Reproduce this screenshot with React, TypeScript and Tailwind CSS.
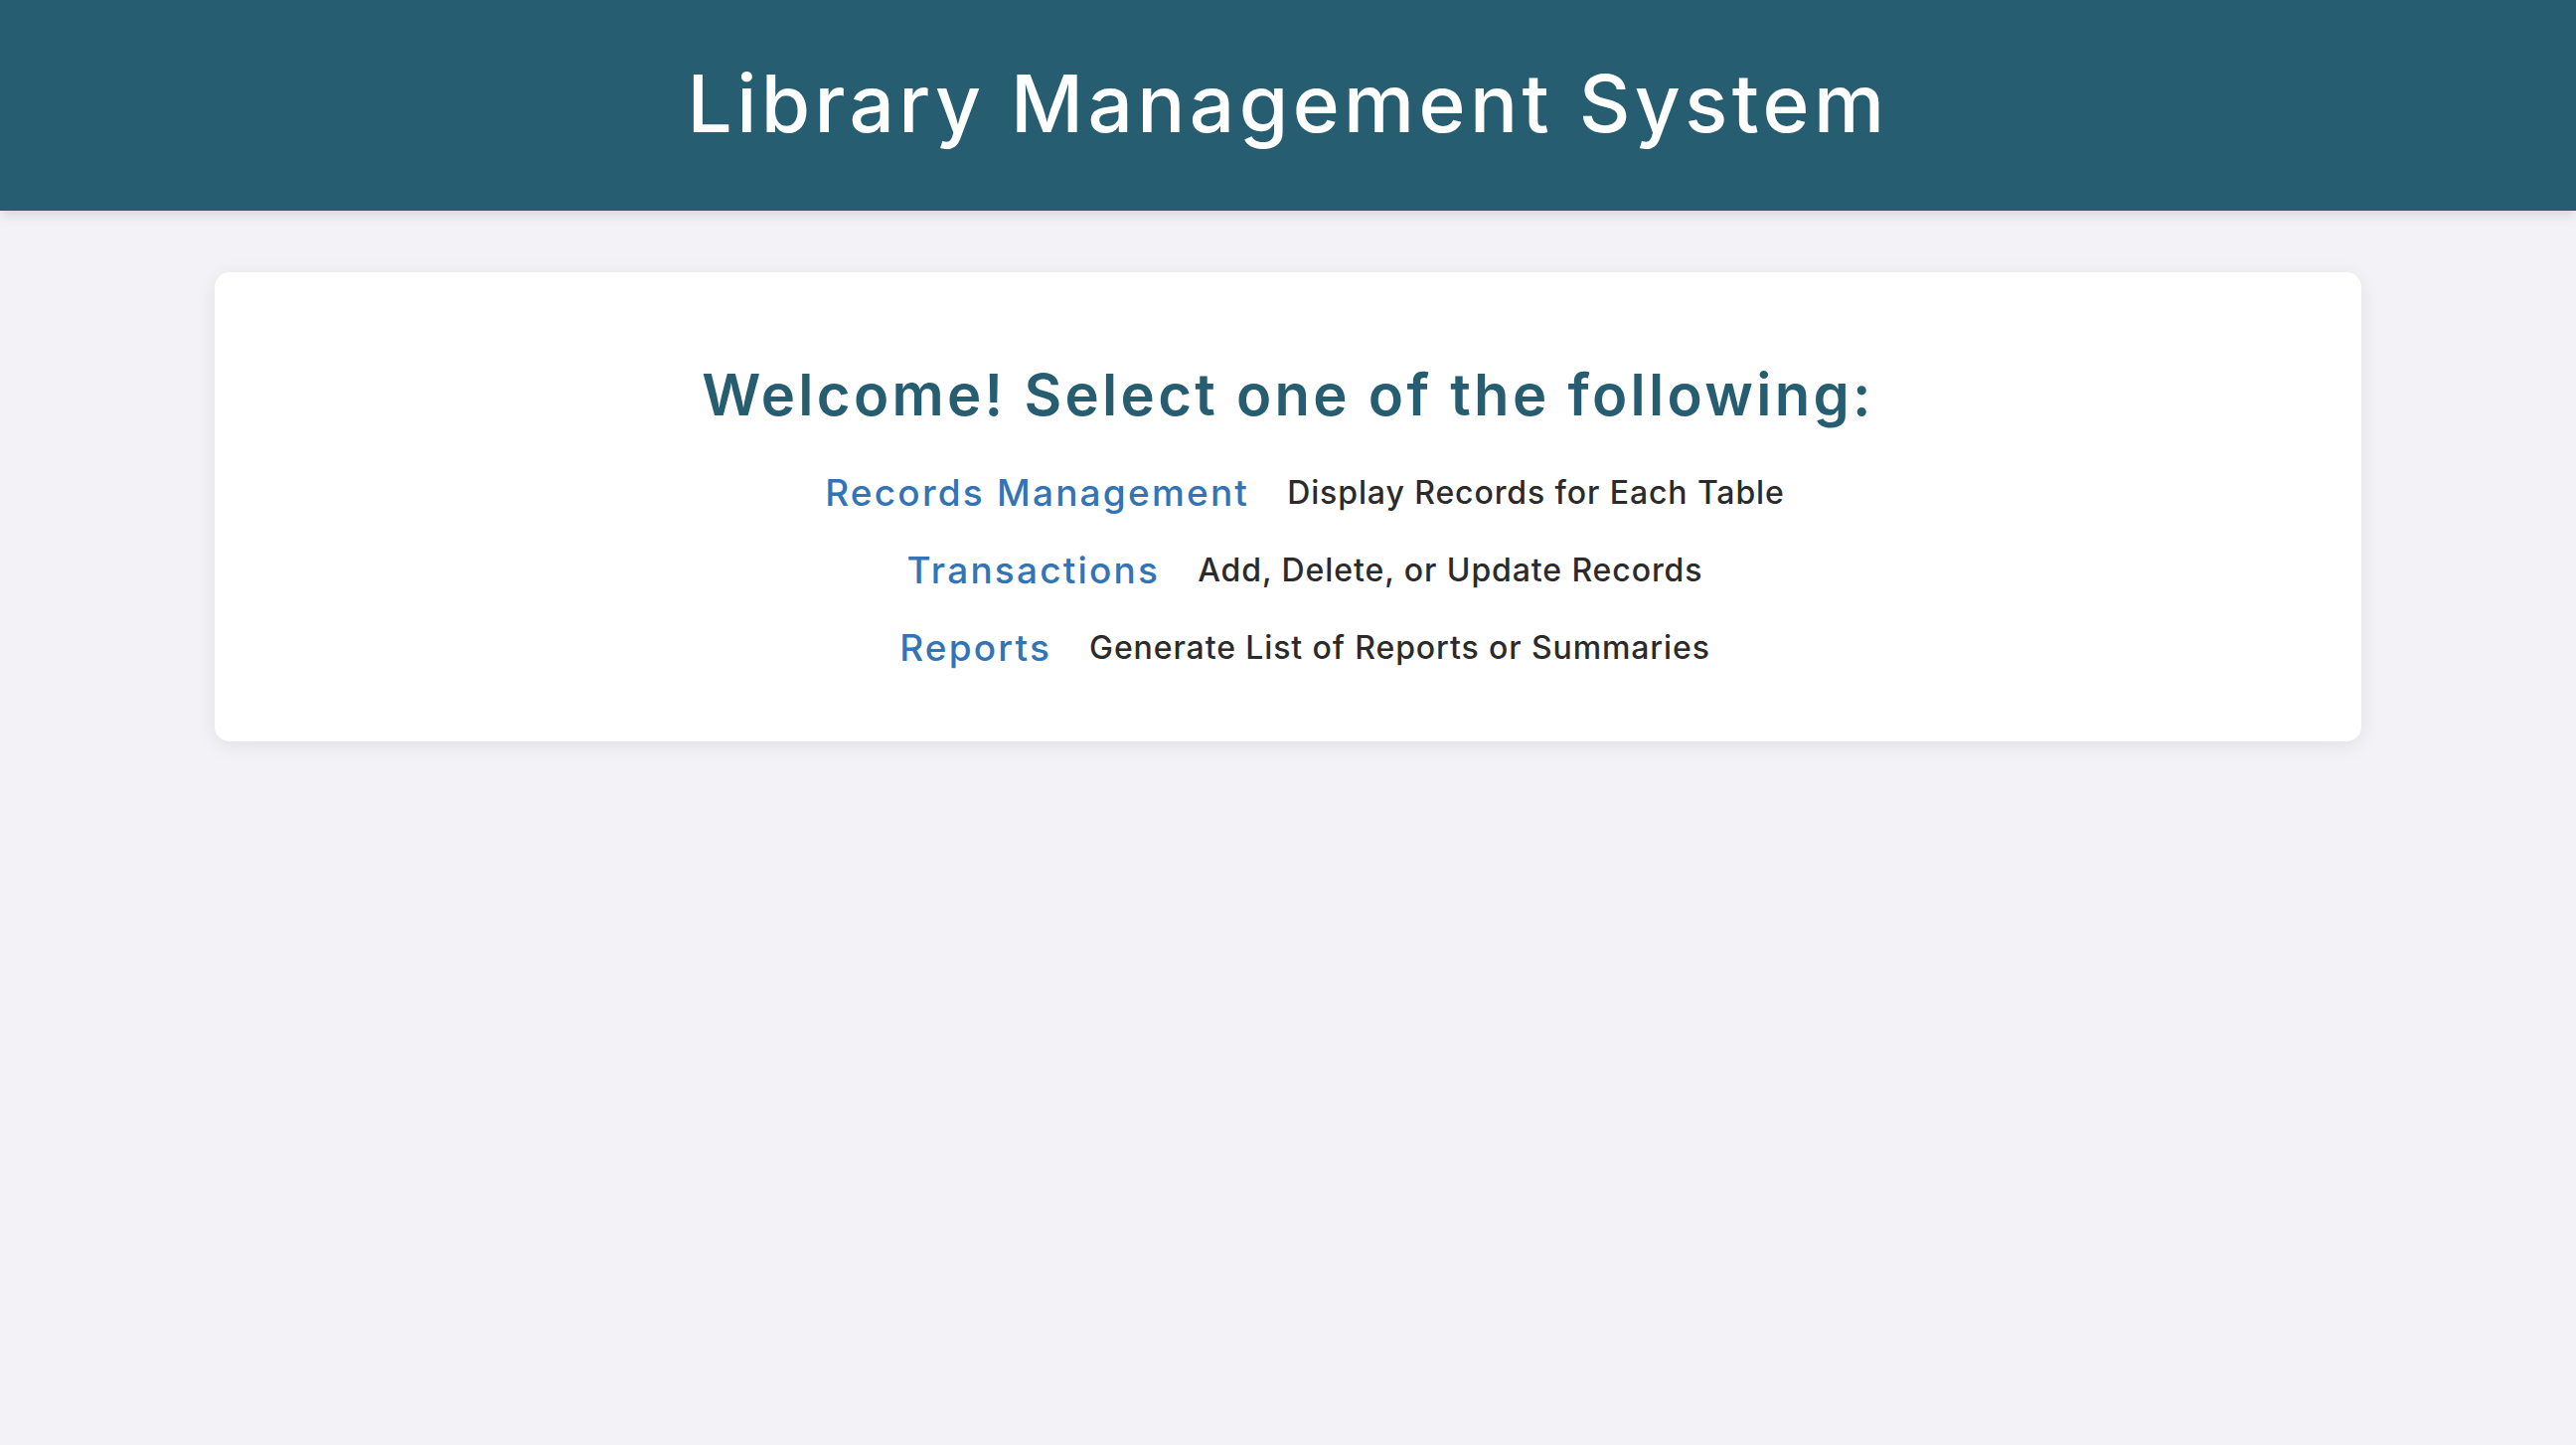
import React from "react";

const rows = [
  { link: "Records Management", desc: "Display Records for Each Table" },
  { link: "Transactions", desc: "Add, Delete, or Update Records" },
  { link: "Reports", desc: "Generate List of Reports or Summaries" },
];

export default function App() {
  return (
    <div className="min-h-[1454px] bg-[#f3f3f7] font-['Inter','Liberation_Sans',sans-serif]">
      <header className="h-[212px] bg-[#275d71] flex items-center justify-center shadow-[0_4px_12px_rgba(0,0,0,0.12)]">
        <h1 className="text-white text-[80px] leading-[96px] font-medium tracking-[4.4px] -mt-[4px]">
          Library Management System
        </h1>
      </header>
      <main className="px-[216px] pt-[62px]">
        <div className="bg-white rounded-[15px] shadow-[0_4px_20px_rgba(0,0,0,0.08)] pt-[88px] pb-[55px] flex flex-col items-center">
          <h2 className="text-[#265d70] text-[58px] leading-[70px] font-semibold tracking-[3.3px]">
            Welcome! Select one of the following:
          </h2>
          <div className="mt-[25px] flex flex-col items-center">
            {rows.map((r) => (
              <div key={r.link} className="h-[78px] pl-[34px] flex items-center gap-[38px]">
                <a href="#" className="text-[#3374b6] text-[37px] font-medium tracking-[2.2px]">
                  {r.link}
                </a>
                <span className="text-[#2b2b2b] text-[32px] font-medium tracking-[0.9px]">{r.desc}</span>
              </div>
            ))}
          </div>
        </div>
      </main>
    </div>
  );
}
